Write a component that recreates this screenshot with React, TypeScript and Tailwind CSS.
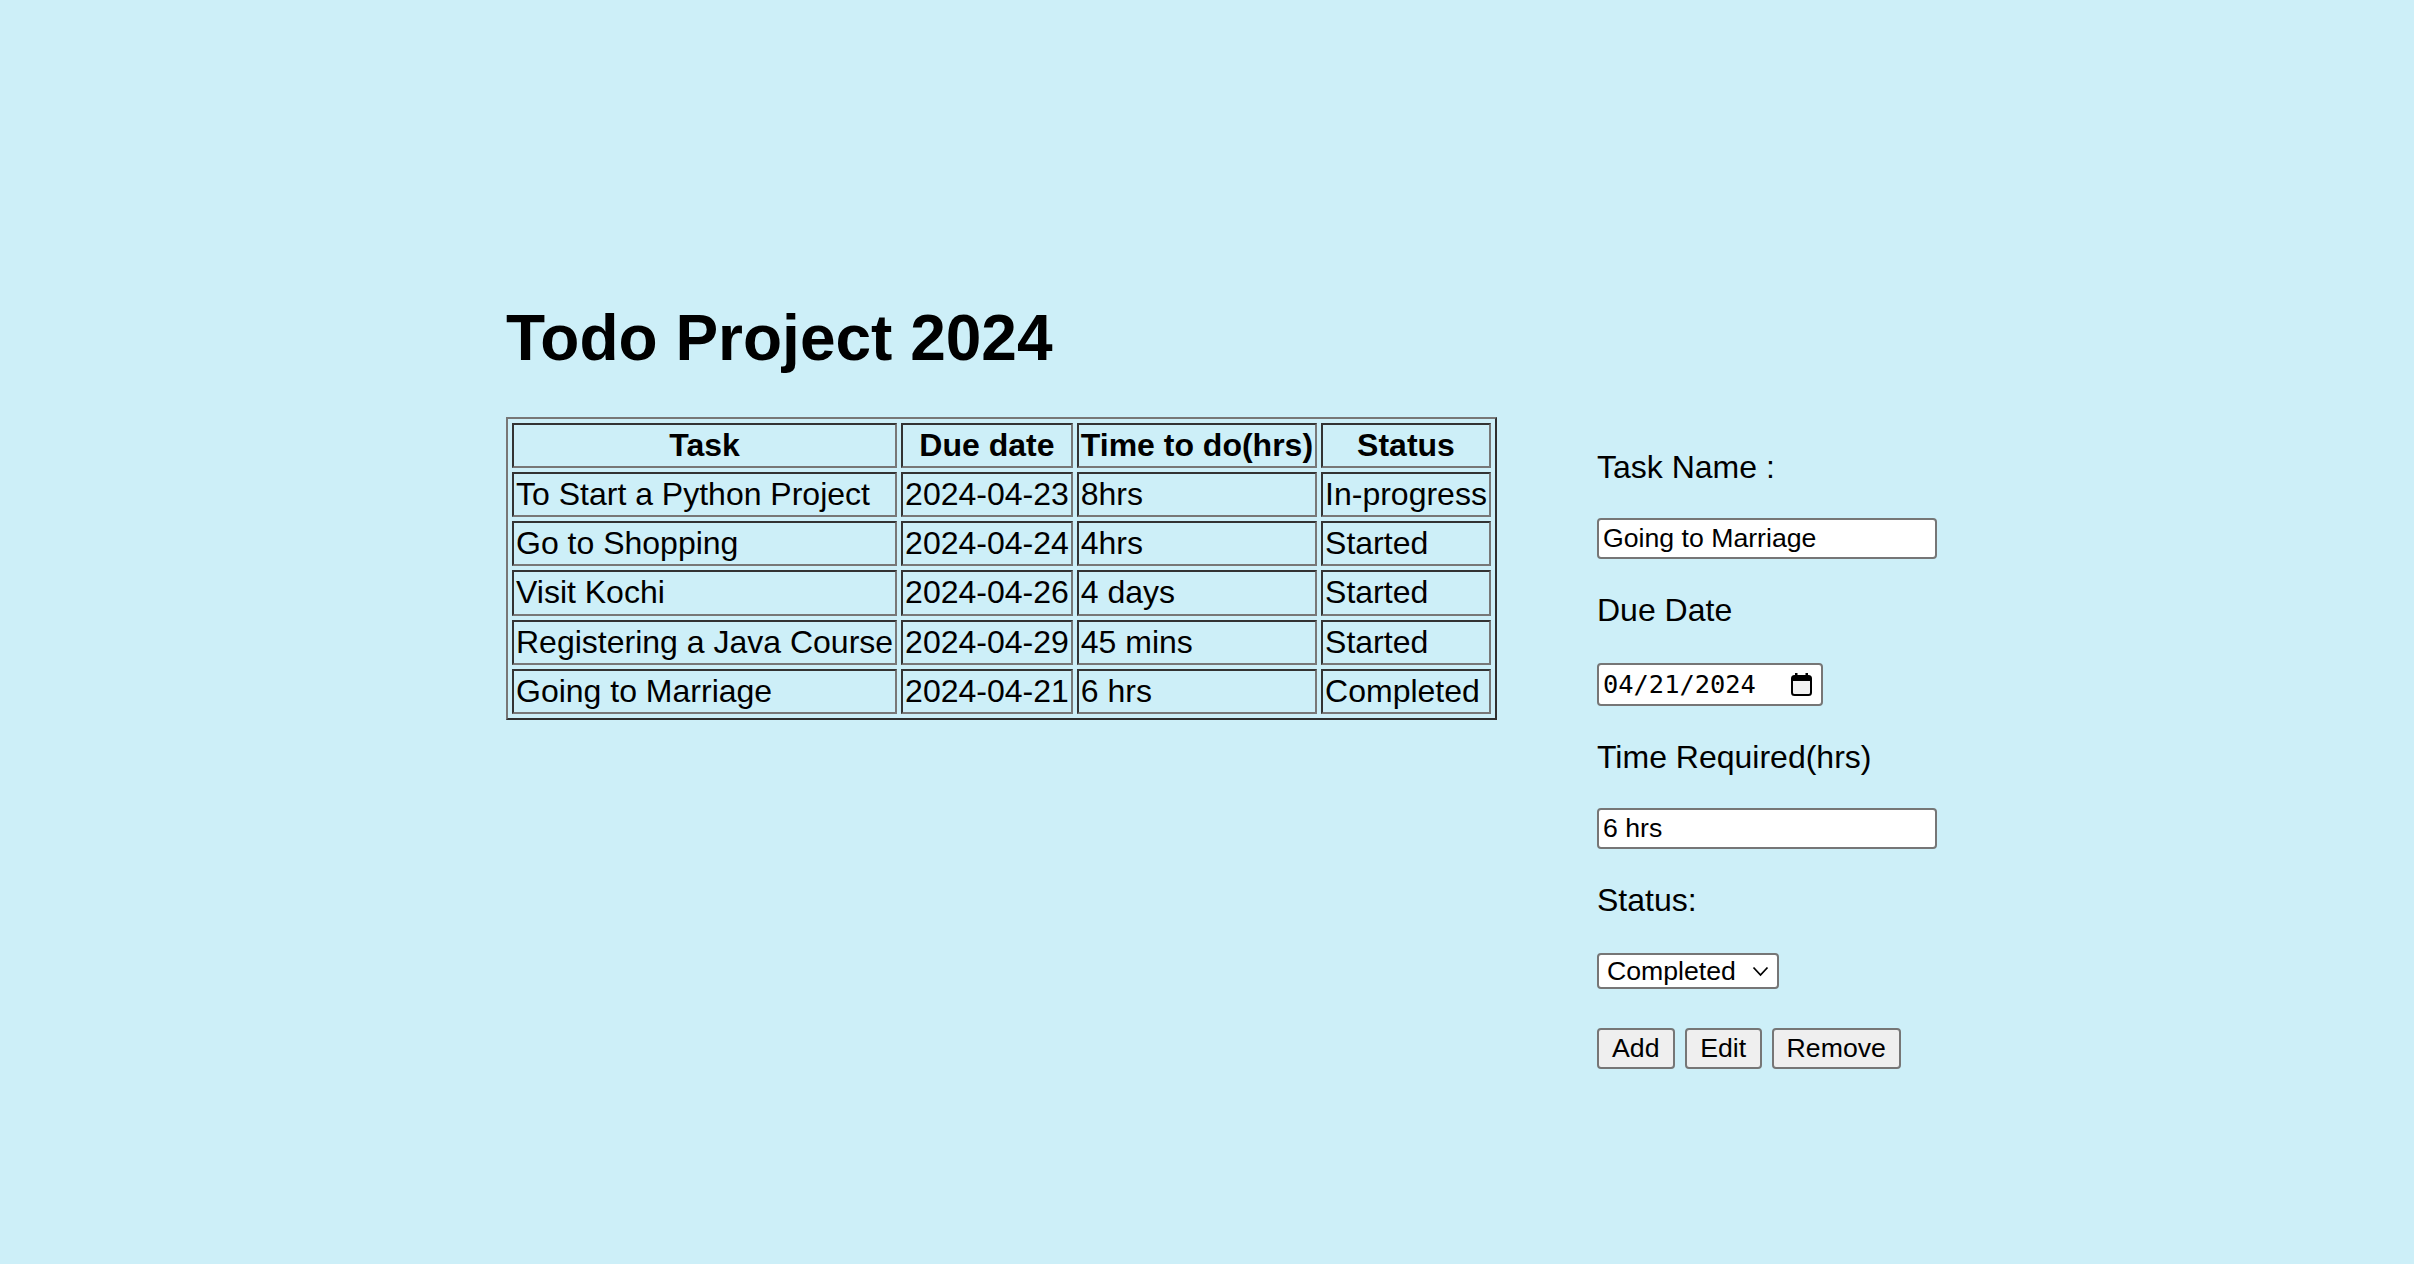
import { useState } from "react";

type Todo = { task: string; due: string; time: string; status: string };

const TODOS: Todo[] = [
  { task: "To Start a Python Project", due: "2024-04-23", time: "8hrs", status: "In-progress" },
  { task: "Go to Shopping", due: "2024-04-24", time: "4hrs", status: "Started" },
  { task: "Visit Kochi", due: "2024-04-26", time: "4 days", status: "Started" },
  { task: "Registering a Java Course", due: "2024-04-29", time: "45 mins", status: "Started" },
  { task: "Going to Marriage", due: "2024-04-21", time: "6 hrs", status: "Completed" },
];

// inset look of the old table border="1"
const cell =
  "border-2 border-t-[#333] border-l-[#333] border-b-[#777] border-r-[#777] p-[2px] text-[32px] leading-[37.3px] whitespace-nowrap";

const field =
  "block border-2 border-[#767676] rounded-[4px] bg-white text-[26.67px] text-black px-[4px] outline-none";

const btn =
  "h-[41.3px] border-2 border-[#767676] rounded-[4px] bg-[#efefef] text-[26.67px] leading-none text-black";

const label = "block text-[32px] leading-[36px]";

export default function App() {
  const [name, setName] = useState("Going to Marriage");
  const [time, setTime] = useState("6 hrs");
  const [status, setStatus] = useState("Completed");

  return (
    <main className="min-h-screen w-full bg-[#cdeff8] text-black font-['Liberation_Sans',Arial,sans-serif] pt-[301px] pl-[506px]">
      <div className="flex items-start">
        {/* left: title + table */}
        <section className="flex flex-col w-[990px] shrink-0">
          <h1 className="text-[64px] leading-[74px] font-bold">Todo Project 2024</h1>

          <table className="mt-[41.5px] self-start border-separate border-spacing-x-[4px] border-spacing-y-[4px] border-2 border-t-[#777] border-l-[#777] border-b-[#2f2f2f] border-r-[#2f2f2f]">
            <thead>
              <tr>
                <th className={`${cell} text-center font-bold`}>Task</th>
                <th className={`${cell} text-center font-bold`}>Due date</th>
                <th className={`${cell} text-center font-bold`}>Time to do(hrs)</th>
                <th className={`${cell} text-center font-bold`}>Status</th>
              </tr>
            </thead>
            <tbody>
              {TODOS.map((t) => (
                <tr key={t.task}>
                  <td className={`${cell} text-left`}>{t.task}</td>
                  <td className={`${cell} text-left`}>{t.due}</td>
                  <td className={`${cell} text-left`}>{t.time}</td>
                  <td className={`${cell} text-left`}>{t.status}</td>
                </tr>
              ))}
            </tbody>
          </table>
        </section>

        {/* right: form */}
        <form
          className="ml-[101px] mt-[148px] flex flex-col gap-[33px] w-[340px]"
          onSubmit={(e) => e.preventDefault()}
        >
          <label className={label}>Task Name :</label>
          <input
            value={name}
            onChange={(e) => setName(e.target.value)}
            className={`${field} w-[339.6px] h-[41.3px]`}
          />

          <label className={label}>Due Date</label>
          <div
            className={`${field} mt-[2px] w-[225.6px] h-[42.6px] flex items-center justify-between pr-[9px]`}
          >
            <span className="font-['DejaVu_Sans_Mono',monospace] text-[25.4px] leading-none">04/21/2024</span>
            <svg width="21" height="23" viewBox="0 0 21 23" aria-hidden="true">
              <rect x="4" y="0" width="2.5" height="4" fill="#000" />
              <rect x="14.5" y="0" width="2.5" height="4" fill="#000" />
              <rect x="1" y="3" width="19" height="19" rx="2.5" fill="#f2f2f2" stroke="#000" strokeWidth="2" />
              <rect x="1" y="3" width="19" height="5" fill="#000" />
            </svg>
          </div>

          <label className={label}>Time Required(hrs)</label>
          <input
            value={time}
            onChange={(e) => setTime(e.target.value)}
            className={`${field} w-[339.6px] h-[41.3px]`}
          />

          <label className={label}>Status:</label>
          <div className="relative mt-[2px] w-[181.6px]">
            <select
              value={status}
              onChange={(e) => setStatus(e.target.value)}
              className={`${field} appearance-none w-full h-[36.3px] pl-[8px] py-0 leading-[29px]`}
            >
              <option>Started</option>
              <option>In-progress</option>
              <option>Completed</option>
            </select>
            <svg
              className="absolute right-[10px] top-[13px] pointer-events-none"
              width="17"
              height="11"
              viewBox="0 0 17 11"
              aria-hidden="true"
            >
              <polyline points="1.5,1.5 8.5,9 15.5,1.5" fill="none" stroke="#000" strokeWidth="1.8" />
            </svg>
          </div>

          <div className="mt-[5.7px] flex gap-[10px]">
            <button type="button" className={`${btn} w-[77.6px]`}>Add</button>
            <button type="button" className={`${btn} w-[77px]`}>Edit</button>
            <button type="button" className={`${btn} w-[129.3px]`}>Remove</button>
          </div>
        </form>
      </div>
    </main>
  );
}
